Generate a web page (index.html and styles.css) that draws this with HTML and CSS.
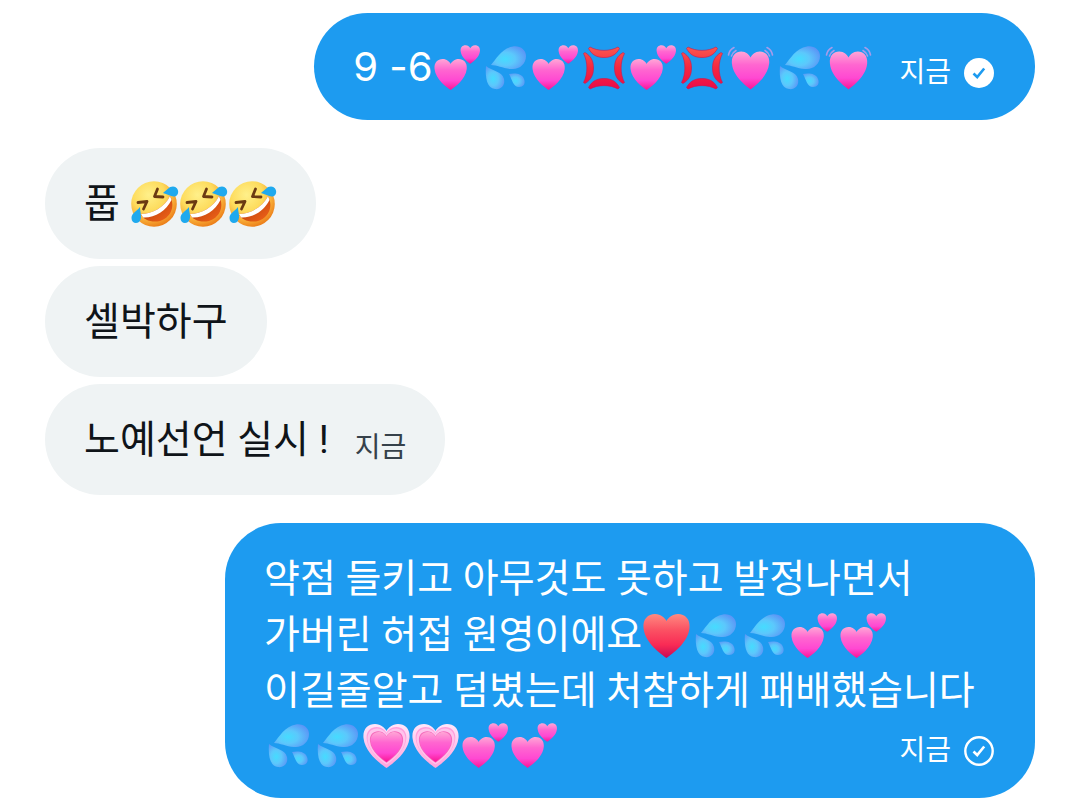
FILE: index.html
```
<!DOCTYPE html>
<html lang="ko">
<head>
<meta charset="utf-8">
<title>메시지</title>
<link rel="stylesheet" href="styles.css">
</head>
<body>

<svg class="defs" aria-hidden="true">
  <defs>
    <linearGradient id="pink" x1="0" y1="0" x2="0" y2="1">
      <stop offset="0" stop-color="#ffa6d6"/>
      <stop offset=".35" stop-color="#ff66d0"/>
      <stop offset=".7" stop-color="#ff48d2"/>
      <stop offset="1" stop-color="#fb1594"/>
    </linearGradient>
    <linearGradient id="red" x1="0" y1="0" x2="0" y2="1">
      <stop offset="0" stop-color="#ff8a80"/>
      <stop offset=".35" stop-color="#fb5364"/>
      <stop offset=".7" stop-color="#f92b55"/>
      <stop offset="1" stop-color="#c70a55"/>
    </linearGradient>
    <linearGradient id="anger-red" x1="0" y1="3" x2="0" y2="46" gradientUnits="userSpaceOnUse">
      <stop offset="0" stop-color="#fb5a50"/>
      <stop offset=".5" stop-color="#f5283f"/>
      <stop offset="1" stop-color="#ea0a4a"/>
    </linearGradient>
    <linearGradient id="pale" x1="0" y1="0" x2="0" y2="1">
      <stop offset="0" stop-color="#ffe6fa"/>
      <stop offset="1" stop-color="#ffa3dc"/>
    </linearGradient>
    <radialGradient id="water" cx=".4" cy=".55" r=".65">
      <stop offset="0" stop-color="#45dcff"/>
      <stop offset=".45" stop-color="#5cc8fc"/>
      <stop offset="1" stop-color="#5b95f6"/>
    </radialGradient>
    <radialGradient id="face" cx=".38" cy=".3" r=".72">
      <stop offset="0" stop-color="#fff08a"/>
      <stop offset=".5" stop-color="#fddb5c"/>
      <stop offset=".75" stop-color="#f9b13a"/>
      <stop offset="1" stop-color="#ec7f1a"/>
    </radialGradient>
    <linearGradient id="mouth" x1="0" y1="0" x2="1" y2="1">
      <stop offset="0" stop-color="#a93208"/>
      <stop offset="1" stop-color="#f4661a"/>
    </linearGradient>
    <path id="heart-shape" d="M24.5 47C19 43 3 32 1.5 17C.6 8 6 3 13 3C19 3 23 7 24.5 10C26 7 30 3 36 3C43 3 48.4 8 47.5 17C46 32 30 43 24.5 47Z"/>
  </defs>

  <symbol id="heart" viewBox="0 0 49 49">
    <use href="#heart-shape" fill="url(#red)"/>
  </symbol>

  <symbol id="growing-heart" viewBox="0 0 49 49">
    <use href="#heart-shape" fill="url(#pale)"/>
    <use href="#heart-shape" transform="translate(3.4 3.4) scale(.86)" fill="#ff9fdc"/>
    <use href="#heart-shape" transform="translate(4.4 5) scale(.82)" fill="#ffc4ec"/>
    <use href="#heart-shape" transform="translate(6.9 8) scale(.72)" fill="#f568bb"/>
    <use href="#heart-shape" transform="translate(7.8 9) scale(.68)" fill="url(#pink)"/>
  </symbol>

  <symbol id="two-hearts" viewBox="0 0 49 49">
    <use href="#heart-shape" transform="translate(1.5 14) scale(.7)" fill="url(#pink)"/>
    <use href="#heart-shape" transform="translate(28 1) scale(.42)" fill="url(#pink)"/>
  </symbol>

  <symbol id="beating-heart" viewBox="0 0 49 49">
    <use href="#heart-shape" transform="translate(4.7 6) scale(.81 .86)" fill="url(#pink)"/>
    <g fill="none" stroke="#a69bea" stroke-width="1.6" stroke-linecap="round">
      <path d="M2.500 12C3 9 5 6 8 4.500M5.500 13C6 11 7.500 9 10 7.500"/>
      <path d="M46.500 12C46 9 44 6 41 4.500M43.500 13C43 11 41.500 9 39 7.500"/>
    </g>
  </symbol>

  <symbol id="sweat" viewBox="0 0 49 49">
    <g fill="url(#water)">
      <path d="M10 22C15 16 21 5 32 3.500C39 2.500 45 7 45 13C45 21 38 27 30 26C22 25.500 16 22 10 22Z"/>
      <path d="M5 23C11 28 21 28 23 36C24.500 43 19 47 14 46C6 45 4 35 5 23Z"/>
      <path d="M28 31C33 30 41 30 43 36C45 41 42 44 38 44C32 44 31 36 28 31Z"/>
    </g>
  </symbol>

  <symbol id="anger" viewBox="0 0 49 49">
    <g fill="url(#anger-red)" stroke="#c9184e" stroke-width=".6" stroke-linejoin="round">
      <path d="M11 4C19 8.500 31 8.500 39 4L40.500 5.500C37 12 32 14.500 25 14.500C18 14.500 13 12 9.500 5.500Z"/>
      <path d="M11 46C19 41.500 31 41.500 39 46L40.500 44.500C37 38 32 35.500 25 35.500C18 35.500 13 38 9.500 44.500Z"/>
      <path d="M4.500 10.500C9 19 9 31 4.500 39.500L6 40.500C12 37 14.500 32 14.500 25C14.500 18 12 13 6 9.500Z"/>
      <path d="M45.500 10.500C41 19 41 31 45.500 39.500L44 40.500C38 37 35.500 32 35.500 25C35.500 18 38 13 44 9.500Z"/>
    </g>
  </symbol>

  <symbol id="rofl" viewBox="0 0 49 49">
    <circle cx="24" cy="24" r="22.800" fill="url(#face)"/>
    <path d="M11 34C22 34 35 27 40 16C46 27 40 38 30 41C22 43 13 40 11 34Z" fill="url(#mouth)"/>
    <path d="M11 34C22 34 35 27 40 16L41.500 20C36 31 25 38 13 37.500Z" fill="#fff"/>
    <g fill="none" stroke="#6b3a12" stroke-width="2.800" stroke-linejoin="round" stroke-linecap="round">
      <path d="M8 22.500L17 21.500L13.500 29"/>
      <path d="M27.500 9L24.500 16.500L33 17"/>
    </g>
    <g fill="#1fa9ee">
      <path d="M33 13C37 10 39 6.500 43 6.500C49 7 49.500 14 46 16C42 18 38 14 33 13Z"/>
      <path d="M10 27C7 31 1.500 33 1.500 38C1.500 43 6 44 9 42C13 38 10 33 10 27Z"/>
    </g>
  </symbol>

  <symbol id="check-solid" viewBox="0 0 32 32">
    <circle cx="16" cy="16" r="15" fill="#fff"/>
    <path d="M10.500 16.500L14.200 20L21.200 11.500" fill="none" stroke="#1d9bf0" stroke-width="2.600"/>
  </symbol>

  <symbol id="check-outline" viewBox="0 0 32 32">
    <circle cx="16" cy="16" r="13.700" fill="none" stroke="#fff" stroke-width="2.400"/>
    <path d="M10.500 16.500L14.200 20L21.200 11.500" fill="none" stroke="#fff" stroke-width="2.600"/>
  </symbol>
</svg>

<main class="chat">
  <div class="group sent">
    <div class="bubble">
      <div class="line short">
        <span class="latin">9 -6</span>
        <svg class="emoji" role="img" aria-label="💕"><use href="#two-hearts"/></svg>
        <svg class="emoji" role="img" aria-label="💦"><use href="#sweat"/></svg>
        <svg class="emoji" role="img" aria-label="💕"><use href="#two-hearts"/></svg>
        <svg class="emoji" role="img" aria-label="💢"><use href="#anger"/></svg>
        <svg class="emoji" role="img" aria-label="💕"><use href="#two-hearts"/></svg>
        <svg class="emoji" role="img" aria-label="💢"><use href="#anger"/></svg>
        <svg class="emoji" role="img" aria-label="💓"><use href="#beating-heart"/></svg>
        <svg class="emoji" role="img" aria-label="💦"><use href="#sweat"/></svg>
        <svg class="emoji" role="img" aria-label="💓"><use href="#beating-heart"/></svg>
        <div class="meta">
          <span>지금</span>
          <svg class="check" role="img" aria-label="읽음"><use href="#check-solid"/></svg>
        </div>
      </div>
    </div>
  </div>

  <div class="group received">
    <div class="bubble">
      <div class="line">
        <span>풉 </span>
        <svg class="emoji" role="img" aria-label="🤣"><use href="#rofl"/></svg>
        <svg class="emoji" role="img" aria-label="🤣"><use href="#rofl"/></svg>
        <svg class="emoji" role="img" aria-label="🤣"><use href="#rofl"/></svg>
      </div>
    </div>
    <div class="bubble">
      <div class="line"><span>셀박하구</span></div>
    </div>
    <div class="bubble">
      <div class="line">
        <span>노예선언 실시 !</span>
        <div class="meta"><span>지금</span></div>
      </div>
    </div>
  </div>

  <div class="group sent">
    <div class="bubble long">
      <div class="line"><span>약점 들키고 아무것도 못하고 발정나면서</span></div>
      <div class="line">
        <span>가버린 허접 원영이에요</span>
        <svg class="emoji" role="img" aria-label="❤️"><use href="#heart"/></svg>
        <svg class="emoji" role="img" aria-label="💦"><use href="#sweat"/></svg>
        <svg class="emoji" role="img" aria-label="💦"><use href="#sweat"/></svg>
        <svg class="emoji" role="img" aria-label="💕"><use href="#two-hearts"/></svg>
        <svg class="emoji" role="img" aria-label="💕"><use href="#two-hearts"/></svg>
      </div>
      <div class="line"><span>이길줄알고 덤볐는데 처참하게 패배했습니다</span></div>
      <div class="line short">
        <svg class="emoji" role="img" aria-label="💦"><use href="#sweat"/></svg>
        <svg class="emoji" role="img" aria-label="💦"><use href="#sweat"/></svg>
        <svg class="emoji" role="img" aria-label="💗"><use href="#growing-heart"/></svg>
        <svg class="emoji" role="img" aria-label="💗"><use href="#growing-heart"/></svg>
        <svg class="emoji" role="img" aria-label="💕"><use href="#two-hearts"/></svg>
        <svg class="emoji" role="img" aria-label="💕"><use href="#two-hearts"/></svg>
        <div class="meta">
          <span>지금</span>
          <svg class="check" role="img" aria-label="보냄"><use href="#check-outline"/></svg>
        </div>
      </div>
    </div>
  </div>
</main>

</body>
</html>
```
FILE: styles.css
```
body {
  margin: 0;
  background: #fff;
  color: #0f1419;
  font-family: Roboto, "Noto Sans CJK KR", sans-serif;
  font-size: 39px;
}

.defs {
  position: absolute;
  width: 0;
  height: 0;
}

.chat {
  display: flex;
  flex-direction: column;
  gap: 28px;
  padding: 13px 0 10px;
}

.group {
  display: flex;
  flex-direction: column;
  align-items: flex-start;
  gap: 7px;
}

.sent {
  align-items: flex-end;
}

.bubble {
  box-sizing: border-box;
  margin: 0 45px;
  padding: 28px 39px 27px;
  border-radius: 56px;
  background: #eff3f4;
}

.sent .bubble {
  padding-right: 40px;
  background: #1d9bf0;
  color: #fff;
}

.sent .long {
  width: 75%;
}

.line {
  display: flex;
  align-items: center;
  height: 56px;
  line-height: 56px;
  white-space: pre;
}

.short {
  height: 52px;
}

.latin {
  font-family: Inter, sans-serif;
  font-size: 40px;
  font-variant-ligatures: no-contextual;
}

.emoji {
  flex: none;
  width: 49px;
  height: 49px;
}

.meta {
  display: flex;
  align-items: center;
  align-self: flex-end;
  gap: 12px;
  margin-left: 26px;
  font-size: 28px;
  line-height: 40px;
}

.received .meta {
  color: #36414a;
}

.long .meta {
  margin-left: auto;
}

.check {
  width: 32px;
  height: 32px;
}
```
